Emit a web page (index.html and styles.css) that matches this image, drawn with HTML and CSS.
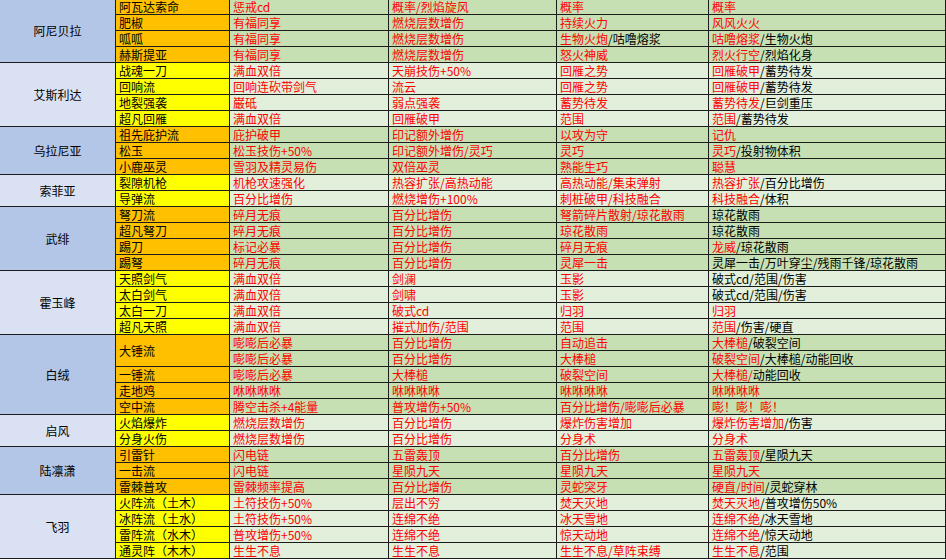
FILE: index.html
```html
<!DOCTYPE html>
<html lang="zh-CN">
<head>
<meta charset="utf-8">
<title>流派表</title>
<link rel="stylesheet" href="styles.css">
</head>
<body>
<table class="sheet">
<colgroup>
<col class="c1"><col class="c2"><col class="c3"><col class="c4"><col class="c5"><col class="c6">
</colgroup>
<tbody class="g dark">
<tr class="first"><td class="name" rowspan="4">阿尼贝拉</td><td class="build">阿瓦达索命</td><td>惩戒cd</td><td>概率/烈焰旋风</td><td>概率</td><td>概率</td></tr>
<tr><td class="build">肥椒</td><td>有福同享</td><td>燃烧层数增伤</td><td>持续火力</td><td>风风火火</td></tr>
<tr><td class="build">呱呱</td><td>有福同享</td><td>燃烧层数增伤</td><td>生物火炮<span class="k">/咕噜熔浆</span></td><td>咕噜熔浆<span class="k">/生物火炮</span></td></tr>
<tr><td class="build">赫斯提亚</td><td>有福同享</td><td>燃烧层数增伤</td><td>怒火神威</td><td>烈火行空<span class="k">/烈焰化身</span></td></tr>
</tbody>
<tbody class="g light">
<tr><td class="name" rowspan="4">艾斯利达</td><td class="build">战魂一刀</td><td>满血双倍</td><td>天崩技伤+50%</td><td>回雁之势</td><td>回雁破甲<span class="k">/蓄势待发</span></td></tr>
<tr><td class="build">回响流</td><td>回响连砍带剑气</td><td>流云</td><td>回雁之势</td><td>回雁破甲<span class="k">/蓄势待发</span></td></tr>
<tr><td class="build">地裂强袭</td><td>巌砥</td><td>弱点强袭</td><td>蓄势待发</td><td>蓄势待发<span class="k">/巨剑重压</span></td></tr>
<tr><td class="build">超凡回雁</td><td>满血双倍</td><td>回雁破甲</td><td>范围</td><td>范围<span class="k">/蓄势待发</span></td></tr>
</tbody>
<tbody class="g dark">
<tr><td class="name" rowspan="3">乌拉尼亚</td><td class="build">祖先庇护流</td><td>庇护破甲</td><td>印记额外增伤</td><td>以攻为守</td><td>记仇</td></tr>
<tr><td class="build">松玉</td><td>松玉技伤+50%</td><td>印记额外增伤/灵巧</td><td>灵巧</td><td>灵巧<span class="k">/投射物体积</span></td></tr>
<tr><td class="build">小鹿巫灵</td><td>雪羽及精灵易伤</td><td>双倍巫灵</td><td>熟能生巧</td><td>聪慧</td></tr>
</tbody>
<tbody class="g light">
<tr><td class="name" rowspan="2">索菲亚</td><td class="build">裂隙机枪</td><td>机枪攻速强化</td><td>热容扩张/高热动能</td><td>高热动能/集束弹射</td><td>热容扩张<span class="k">/百分比增伤</span></td></tr>
<tr><td class="build">导弹流</td><td>百分比增伤</td><td>燃烧增伤+100%</td><td>刺桩破甲/科技融合</td><td>科技融合<span class="k">/体积</span></td></tr>
</tbody>
<tbody class="g dark">
<tr><td class="name" rowspan="4">武绯</td><td class="build">弩刀流</td><td>碎月无痕</td><td>百分比增伤</td><td>弩箭碎片散射/琼花散雨</td><td class="k">琼花散雨</td></tr>
<tr><td class="build">超凡弩刀</td><td>碎月无痕</td><td>百分比增伤</td><td>琼花散雨</td><td class="k">琼花散雨</td></tr>
<tr><td class="build">踢刀</td><td>标记必暴</td><td>百分比增伤</td><td>碎月无痕</td><td>龙威<span class="k">/琼花散雨</span></td></tr>
<tr><td class="build">踢弩</td><td>碎月无痕</td><td>百分比增伤</td><td>灵犀一击</td><td class="k">灵犀一击/万叶穿尘/残雨千锋/琼花散雨</td></tr>
</tbody>
<tbody class="g light">
<tr><td class="name" rowspan="4">霍玉峰</td><td class="build">天照剑气</td><td>满血双倍</td><td>剑澜</td><td>玉影</td><td class="k">破式cd/范围/伤害</td></tr>
<tr><td class="build">太白剑气</td><td>满血双倍</td><td>剑啸</td><td>玉影</td><td class="k">破式cd/范围/伤害</td></tr>
<tr><td class="build">太白一刀</td><td>满血双倍</td><td>破式cd</td><td>归羽</td><td>归羽</td></tr>
<tr><td class="build">超凡天照</td><td>满血双倍</td><td>摧式加伤/范围</td><td>范围</td><td>范围<span class="k">/伤害/硬直</span></td></tr>
</tbody>
<tbody class="g dark">
<tr><td class="name" rowspan="5">白绒</td><td class="build" rowspan="2">大锤流</td><td>嘭嘭后必暴</td><td>百分比增伤</td><td>自动追击</td><td>大棒槌<span class="k">/破裂空间</span></td></tr>
<tr><td>嘭嘭后必暴</td><td>百分比增伤</td><td>大棒槌</td><td>破裂空间<span class="k">/大棒槌/动能回收</span></td></tr>
<tr><td class="build">一锤流</td><td>嘭嘭后必暴</td><td>大棒槌</td><td>破裂空间</td><td>大棒槌/<span class="k">动能回收</span></td></tr>
<tr><td class="build">走地鸡</td><td>咻咻咻咻</td><td>咻咻咻咻</td><td>咻咻咻咻</td><td>咻咻咻咻</td></tr>
<tr><td class="build">空中流</td><td>腾空击杀+4能量</td><td>普攻增伤+50%</td><td>百分比增伤/嘭嘭后必暴</td><td>嘭！嘭！嘭！</td></tr>
</tbody>
<tbody class="g light">
<tr><td class="name" rowspan="2">启风</td><td class="build">火焰爆炸</td><td>燃烧层数增伤</td><td>百分比增伤</td><td>爆炸伤害增加</td><td>爆炸伤害增加<span class="k">/伤害</span></td></tr>
<tr><td class="build">分身火伤</td><td>燃烧层数增伤</td><td>百分比增伤</td><td>分身术</td><td>分身术</td></tr>
</tbody>
<tbody class="g dark">
<tr><td class="name" rowspan="3">陆凛潇</td><td class="build">引雷针</td><td>闪电链</td><td>五雷轰顶</td><td>百分比增伤</td><td>五雷轰顶<span class="k">/星陨九天</span></td></tr>
<tr><td class="build">一击流</td><td>闪电链</td><td>星陨九天</td><td>星陨九天</td><td>星陨九天</td></tr>
<tr><td class="build">雷棘普攻</td><td>雷棘频率提高</td><td>百分比增伤</td><td>灵蛇突牙</td><td>硬直/时间<span class="k">/灵蛇穿林</span></td></tr>
</tbody>
<tbody class="g light">
<tr><td class="name" rowspan="4">飞羽</td><td class="build">火阵流（土木）</td><td>土符技伤+50%</td><td>层出不穷</td><td>焚天灭地</td><td>焚天灭地<span class="k">/普攻增伤50%</span></td></tr>
<tr><td class="build">冰阵流（土水）</td><td>土符技伤+50%</td><td>连绵不绝</td><td>冰天雪地</td><td>连绵不绝<span class="k">/冰天雪地</span></td></tr>
<tr><td class="build">雷阵流（水木）</td><td>普攻增伤+50%</td><td>连绵不绝</td><td>惊天动地</td><td>连绵不绝<span class="k">/惊天动地</span></td></tr>
<tr><td class="build">通灵阵（木木）</td><td>生生不息</td><td>生生不息</td><td>生生不息/草阵束缚</td><td>生生不息<span class="k">/范围</span></td></tr>
</tbody>
</table>
</body>
</html>
```
FILE: styles.css
```css
html, body {
  margin: 0;
  padding: 0;
  background: #ffffff;
  overflow: hidden;
}

.sheet {
  width: 946px;
  table-layout: fixed;
  border-collapse: separate;
  border-spacing: 0;
  font-family: "Noto Sans CJK SC", "Microsoft YaHei", sans-serif;
  font-size: 12px;
  color: #ff0000;
}

.c1 { width: 116px; }
.c2 { width: 114px; }
.c3 { width: 159px; }
.c4 { width: 168px; }
.c5 { width: 152px; }
.c6 { width: 237px; }

.sheet td {
  height: 14px;
  padding: 1px 0 0 3px;
  line-height: 14px;
  border-right: 1px solid #1c1c1c;
  border-bottom: 1px solid #1c1c1c;
  white-space: nowrap;
  overflow: hidden;
  vertical-align: middle;
  box-sizing: content-box;
}

.sheet .first td {
  padding-top: 0;
}

.sheet td.name {
  padding: 0;
  text-align: center;
  color: #000000;
}

.sheet td.build {
  color: #000000;
}

.k {
  color: #000000;
}

.dark td { background: #c6e0b4; }
.dark td.name { background: #b4c6e7; }
.dark td.build { background: #ffc000; }

.light td { background: #e2efda; }
.light td.name { background: #d9e1f2; }
.light td.build { background: #ffff00; }
```
